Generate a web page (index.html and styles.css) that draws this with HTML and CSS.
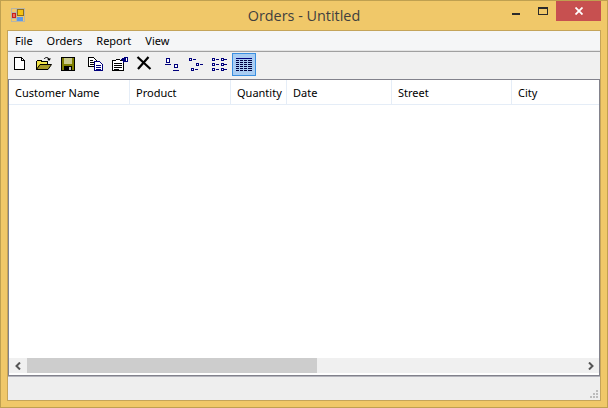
FILE: index.html
```html
<!DOCTYPE html>
<html lang="en">
<head>
    <meta charset="UTF-8">
    <meta name="viewport" content="width=device-width, initial-scale=1.0">
    <title>Orders - Untitled</title>
    <link rel="stylesheet" href="styles.css">
</head>
<body>

<div class="window">
    <div class="titlebar">
        <svg class="app-icon" width="14" height="14" viewBox="0 0 14 14" shape-rendering="crispEdges">
            <path d="M0.5 0.5H13.5V13.5H0.5ZM5.5 0.5V13.5M0.5 4.5H5.5M0.5 10.5H5.5" fill="none" stroke="#b7b5a8"/>
            <rect x="6" y="1" width="7" height="7" fill="#f4c210"/>
            <rect x="6.5" y="1.5" width="6" height="6" fill="none" stroke="#8f6d18"/>
            <rect x="1" y="5" width="4" height="5" fill="#c8201c"/>
            <rect x="2" y="6" width="2" height="3" fill="#e87060"/>
            <rect x="6" y="9" width="6" height="4" fill="#5c9ae8"/>
        </svg>
        <div class="title">Orders - Untitled</div>
        <div class="caption">
            <div class="cap-btn">
                <svg width="10" height="4" viewBox="0 0 10 4" shape-rendering="crispEdges" class="cap-min"><rect width="8" height="2" fill="#2b2b2b"/></svg>
            </div>
            <div class="cap-btn">
                <svg width="10" height="8" viewBox="0 0 10 8" shape-rendering="crispEdges" class="cap-max"><rect x="0.5" y="0.5" width="9" height="7" fill="none" stroke="#2b2b2b"/><rect width="10" height="2" fill="#2b2b2b"/></svg>
            </div>
            <div class="cap-close">
                <svg width="8" height="8" viewBox="0 0 8 8"><path d="M0.5 0.5L7.5 7.5M7.5 0.5L0.5 7.5" stroke="#fff" stroke-width="1.8" fill="none"/></svg>
            </div>
        </div>
    </div>

    <div class="client">
        <div class="menubar">
            <span class="menu-item">File</span>
            <span class="menu-item">Orders</span>
            <span class="menu-item">Report</span>
            <span class="menu-item">View</span>
        </div>

        <div class="toolbar">
            <!-- new -->
            <span class="tool"><svg width="16" height="16" viewBox="0 0 16 16" shape-rendering="crispEdges"><path d="M2.5 1.5H9.5L12.5 4.5V13.5H2.5Z" fill="#fff" stroke="#000"/><path d="M9.5 1.5V4.5H12.5" fill="none" stroke="#000"/></svg></span>
            <!-- open -->
            <span class="tool"><svg width="16" height="16" viewBox="0 0 16 16"><path d="M0.5 13.5V5.5L2 4H5L6 5.5H11.5V8" fill="#f2e44a" stroke="#000" shape-rendering="crispEdges"/><path d="M0.5 13.5L4 8.5H15.5L12 13.5Z" fill="#a89a28" stroke="#000"/><path d="M8 3C9.5 1 12 1 13 3" stroke="#000" fill="none"/><path d="M11 2.5H15L13 5Z" fill="#000"/></svg></span>
            <!-- save -->
            <span class="tool"><svg width="16" height="16" viewBox="0 0 16 16" shape-rendering="crispEdges"><rect x="1.5" y="1.5" width="13" height="13" fill="#808000" stroke="#000"/><rect x="4" y="2" width="8" height="6" fill="#c9c98c"/><rect x="4" y="10" width="8" height="4" fill="#000"/><rect x="9" y="11" width="2" height="3" fill="#bcbcbc"/></svg></span>
            <span class="tool-gap"></span>
            <!-- copy -->
            <span class="tool"><svg width="16" height="16" viewBox="0 0 16 16" shape-rendering="crispEdges"><path d="M0.5 1.5H5.5L8.5 4.5V10.5H0.5Z" fill="#fff" stroke="#000"/><path d="M2 4H5M2 6H7M2 8H6" stroke="#000"/><path d="M6.5 5.5H11.5L14.5 8.5V14.5H6.5Z" fill="#fff" stroke="#00007c"/><path d="M8 9H13M8 11H13M8 13H13" stroke="#00007c"/></svg></span>
            <!-- paste -->
            <span class="tool"><svg width="16" height="16" viewBox="0 0 16 16" shape-rendering="crispEdges"><path d="M0.5 4.5H3.5L5 3H7L8.5 4.5H11.5V14.5H0.5Z" fill="#fff" stroke="#000"/><path d="M2 7H10M2 9H10M2 11H10M2 13H7" stroke="#000"/><path d="M8 4L13 1H16V6H13L11 7V5Z" fill="#00007c"/><rect x="14" y="2" width="1" height="3" fill="#fff"/></svg></span>
            <!-- delete -->
            <span class="tool"><svg width="16" height="16" viewBox="0 0 16 16"><path d="M1.5 1L14.5 13M12.5 1L2 13" stroke="#000" stroke-width="2.2" fill="none"/></svg></span>
            <span class="tool-gap"></span>
            <!-- large icons -->
            <span class="tool"><svg width="16" height="16" viewBox="0 0 16 16" shape-rendering="crispEdges" class="navy"><rect x="2.5" y="2.5" width="3" height="4"/><path d="M1 8.5H7"/><rect x="10.5" y="8.5" width="3" height="3"/><path d="M9 14.5H15"/></svg></span>
            <!-- small icons -->
            <span class="tool"><svg width="16" height="16" viewBox="0 0 16 16" shape-rendering="crispEdges" class="navy"><rect x="1.5" y="2.5" width="2" height="2"/><path d="M5 3.5H8"/><rect x="8.5" y="7.5" width="2" height="2"/><path d="M12 8.5H15"/><rect x="3.5" y="12.5" width="2" height="2"/><path d="M7 13.5H10"/></svg></span>
            <!-- list -->
            <span class="tool"><svg width="16" height="16" viewBox="0 0 16 16" shape-rendering="crispEdges" class="navy"><rect x="0.5" y="2.5" width="2" height="2"/><path d="M4 3.5H7"/><rect x="9.5" y="2.5" width="2" height="2"/><path d="M12 3.5H15"/><rect x="0.5" y="7.5" width="2" height="2"/><path d="M4 8.5H7"/><rect x="9.5" y="7.5" width="2" height="2"/><path d="M12 8.5H15"/><rect x="0.5" y="12.5" width="2" height="2"/><path d="M4 13.5H7"/><rect x="9.5" y="12.5" width="2" height="2"/><path d="M12 13.5H15"/></svg></span>
            <!-- details, active -->
            <span class="tool active"><svg width="18" height="16" viewBox="0 0 18 16" shape-rendering="crispEdges"><path d="M1 2.5H17" stroke="#00007c"/><path d="M1 4.5H17M1 6.5H17M1 8.5H17M1 10.5H17M1 12.5H17M1 14.5H17" stroke="#000040"/><path d="M4.5 4V15M8.5 4V15M12.5 4V15" stroke="#a9cdf3"/></svg></span>
        </div>

        <div class="listview">
            <div class="list-head">
                <div class="col col-name">Customer Name</div>
                <div class="col col-product">Product</div>
                <div class="col col-qty">Quantity</div>
                <div class="col col-date">Date</div>
                <div class="col col-street">Street</div>
                <div class="col col-city">City</div>
            </div>
            <div class="list-body"></div>
            <div class="hscroll">
                <div class="arrow"><svg width="7" height="8" viewBox="0 0 7 8"><path d="M5 0.5L1.5 4L5 7.5" stroke="#555" stroke-width="2" fill="none"/></svg></div>
                <div class="track"><div class="thumb"></div></div>
                <div class="arrow"><svg width="7" height="8" viewBox="0 0 7 8"><path d="M2 0.5L5.5 4L2 7.5" stroke="#555" stroke-width="2" fill="none"/></svg></div>
            </div>
        </div>

        <div class="statusbar">
            <svg class="grip" width="8" height="8" viewBox="0 0 8 8" shape-rendering="crispEdges" fill="#bcbcbc"><rect x="6" y="0" width="2" height="2"/><rect x="3" y="3" width="2" height="2"/><rect x="6" y="3" width="2" height="2"/><rect x="0" y="6" width="2" height="2"/><rect x="3" y="6" width="2" height="2"/><rect x="6" y="6" width="2" height="2"/></svg>
        </div>
    </div>
</div>

</body>
</html>
```

FILE: styles.css
```css
html, body {
    margin: 0;
    height: 100%;
}
body {
    font-family: "Noto Sans", Arial, sans-serif;
    font-size: 11px;
    color: #000;
    overflow: hidden;
}
.window {
    box-sizing: border-box;
    width: 608px;
    height: 408px;
    display: flex;
    flex-direction: column;
    background-color: #f0c869;
    border: 1px solid #bfa050;
    padding: 0 6px 6px 6px;
}
.titlebar {
    height: 29px;
    display: flex;
    align-items: flex-start;
    position: relative;
    flex: none;
}
.app-icon {
    margin: 7px 0 0 4px;
}
.title {
    position: absolute;
    left: 0;
    right: 0;
    top: 5px;
    text-align: center;
    font-family: "Open Sans", sans-serif;
    font-size: 14.4px;
    color: #3f3f3f;
}
.caption {
    margin-left: auto;
    display: flex;
}
.cap-btn {
    width: 26px;
    display: flex;
    justify-content: center;
}
.cap-min {
    margin-top: 12px;
}
.cap-max {
    margin-top: 6px;
}
.cap-close {
    width: 45px;
    height: 20px;
    background-color: #c75050;
    display: flex;
    align-items: center;
    justify-content: center;
}
.client {
    flex: 1;
    display: flex;
    flex-direction: column;
    background-color: #f0f0f0;
    border: 1px solid #c4a45a;
    min-height: 0;
}
.menubar {
    height: 19px;
    flex: none;
    display: flex;
    align-items: center;
    padding-left: 7px;
    gap: 14px;
    background-color: #f5f6f7;
    border-bottom: 1px solid #e4e4e4;
}
.toolbar {
    height: 26px;
    flex: none;
    display: flex;
    align-items: flex-start;
    padding-top: 1px;
    background-color: #f0f0f0;
    border-top: 1px solid #a0a0a0;
}
.tool {
    width: 24px;
    height: 23px;
    box-sizing: border-box;
    display: flex;
    justify-content: center;
    padding-top: 3px;
}
.tool-gap {
    width: 4px;
}
.tool.active {
    background-color: #a9cdf3;
    box-shadow: inset 0 0 0 1px #3a8fe0;
}
.navy {
    fill: #fff;
    stroke: #00007c;
}
.listview {
    flex: 1;
    min-height: 0;
    display: flex;
    flex-direction: column;
    background-color: #fff;
    border: 1px solid #82828c;
}
.list-head {
    height: 24px;
    flex: none;
    display: flex;
    border-bottom: 1px solid #e5edf7;
}
.col {
    box-sizing: border-box;
    padding: 5px 0 0 6px;
    border-right: 1px solid #e5edf7;
    white-space: nowrap;
    overflow: hidden;
}
.col-name { width: 121px; }
.col-product { width: 101px; }
.col-qty { width: 56px; }
.col-date { width: 105px; }
.col-street { width: 120px; }
.col-city { flex: 1; border-right: none; }
.list-body {
    flex: 1;
}
.hscroll {
    height: 15px;
    flex: none;
    display: flex;
    background-color: #f0f0f0;
    border-bottom: 2px solid #fff;
}
.arrow {
    width: 18px;
    display: flex;
    align-items: center;
    justify-content: center;
    flex: none;
}
.track {
    flex: 1;
    display: flex;
}
.thumb {
    width: 290px;
    background-color: #cdcdcd;
}
.statusbar {
    height: 21px;
    flex: none;
    display: flex;
    justify-content: flex-end;
    align-items: flex-end;
    padding: 0 2px 2px 0;
    background-color: #eeeeee;
    border-top: 1px solid #b4b4bc;
    box-sizing: content-box;
}
.grip {
    display: block;
}
```
